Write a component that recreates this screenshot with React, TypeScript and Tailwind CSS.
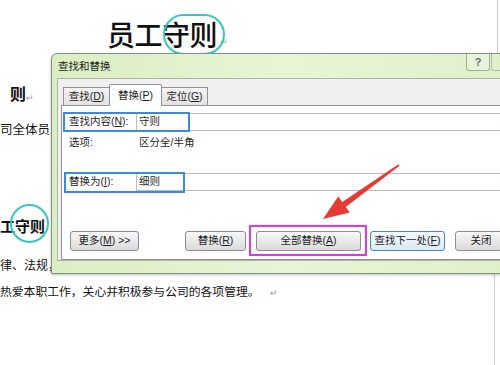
import React from "react";

function RetMark({ cls = "" }: { cls?: string }) {
  return <span className={`text-[9px] leading-none text-[#9a9a9a] ${cls}`}>↵</span>;
}

function Btn({ children, cls, primary = false }: { children: React.ReactNode; cls: string; primary?: boolean }) {
  return (
    <div
      className={`h-[20px] shrink-0 flex items-center justify-center rounded-[3px] border text-[10.5px] text-[#1e1e1e] ${cls} ${
        primary
          ? "border-[#4a86b8] bg-linear-to-b from-[#f4f9fd] to-[#dbeaf5]"
          : "border-[#8c8c8c] bg-linear-to-b from-[#f8f8f8] to-[#dadada]"
      }`}
    >
      {children}
    </div>
  );
}

function Tab({ children, selected = false, cls }: { children: React.ReactNode; selected?: boolean; cls: string }) {
  return (
    <div
      className={`flex items-center justify-center border-t border-x border-[#8e9399] text-[10.5px] text-[#1e1e1e] shrink-0 ${cls} ${
        selected ? "h-[22px] bg-white rounded-t-[2px] -mx-px relative z-10" : "h-[18px] mb-px bg-linear-to-b from-[#f4f4f4] to-[#e2e2e2]"
      }`}
    >
      {children}
    </div>
  );
}

export default function App() {
  return (
    <div className="relative w-[500px] h-[365px] overflow-hidden bg-white font-['Liberation_Sans','Noto_Sans_CJK_SC',sans-serif] text-[#111]">
      {/* document behind */}
      <div className="flex flex-col">
        <div className="h-[53px] pt-[21px] pl-[107px] flex items-start">
          <span className="text-[28px] leading-[32px] font-medium tracking-[-0.5px]">员工守则</span>
          <RetMark cls="ml-[3px] mt-[17px]" />
        </div>
        <div className="mt-[32px] h-[20px] pl-[10px] flex items-center">
          <span className="text-[16px] leading-[20px] font-bold">则</span>
          <RetMark cls="mt-[6px]" />
        </div>
        <div className="mt-[17px] h-[16px] flex items-center">
          <span className="text-[12.5px] leading-[16px]">司全体员工</span>
        </div>
        <div className="mt-[79px] h-[20px] flex items-center">
          <span className="text-[15px] leading-[20px] font-bold">工守则</span>
          <RetMark cls="ml-[6px] mt-[6px]" />
        </div>
        <div className="mt-[21px] h-[16px] flex items-center">
          <span className="text-[12px] leading-[16px]">律、法规，</span>
        </div>
        <div className="mt-[10px] h-[16px] flex items-center">
          <span className="text-[11.8px] leading-[16px]">热爱本职工作，关心并积极参与公司的各项管理。</span>
          <RetMark cls="ml-[10px] mt-[2px]" />
        </div>
      </div>

      {/* page edge lines */}
      <div className="absolute left-[497px] top-0 w-px h-[53px] bg-[#c9c9c9]" />
      <div className="absolute left-[494px] top-[274px] w-px h-[91px] bg-[#d0d0d0]" />

      {/* cyan circles */}
      <div className="absolute left-[163px] top-[14px] w-[62px] h-[41px] rounded-full border-[2.5px] border-[#36c7c1]" />
      <div className="absolute left-[10px] top-[204px] w-[39px] h-[39px] rounded-full border-[2.5px] border-[#36c7c1]" />

      {/* dialog */}
      <div className="absolute left-[51px] top-[53px] w-[470px] h-[221px] border border-[#85927f] rounded-tl-[6px] bg-linear-to-r from-[#dbeec3] via-[#e7f5d5] to-[#def0c8] flex flex-col shadow-[0_1px_3px_rgba(0,0,0,0.25)]">
        <div className="h-[24px] shrink-0 flex items-start">
          <div className="pl-[6px] pt-[6px] text-[10.5px] leading-[12px] text-[#222]">查找和替换</div>
          <div className="flex-1" />
          <div className="w-[24px] h-[17px] border-x border-b border-[#a2ad9a] rounded-b-[3px] bg-[#e8f3dc] flex items-center justify-center text-[11px] font-bold text-[#6a6a6a]">
            ?
          </div>
          <div className="w-[29px] h-[17px] ml-px border-l border-b border-[#b4bdac] rounded-bl-[3px]" />
        </div>
        <div className="mx-[5px] h-[183px] bg-[#f0f0f0] border border-[#adb5a7] pl-[3px] flex flex-col">
          <div className="mt-[5px] h-[22px] flex items-end pl-[2px] -mb-px relative z-10">
            <Tab cls="w-[47px]">
              查找(<u>D</u>)
            </Tab>
            <Tab cls="w-[53px]" selected>
              替换(<u>P</u>)
            </Tab>
            <Tab cls="w-[47px]">
              定位(<u>G</u>)
            </Tab>
          </div>
          <div className="h-[155px] bg-white border border-[#8e9399] flex flex-col text-[10.5px] text-[#1e1e1e]">
            <div className="mt-[7px] h-[18px] flex">
              <div className="w-[74px] pl-[7px] flex items-center shrink-0">
                查找内容(<u>N</u>):
              </div>
              <div className="flex-1 border border-[#b8bcc4] pl-[2px] flex items-center">守则</div>
            </div>
            <div className="mt-[4px] h-[16px] flex">
              <div className="w-[74px] pl-[7px] flex items-center shrink-0">选项:</div>
              <div className="pl-[3px] flex items-center">区分全/半角</div>
            </div>
            <div className="mt-[22px] h-[18px] flex">
              <div className="w-[74px] pl-[7px] flex items-center shrink-0">
                替换为(<u>I</u>):
              </div>
              <div className="flex-1 border border-[#b8bcc4] pl-[2px] flex items-center">细则</div>
            </div>
            <div className="mt-[40px] h-[20px] flex pl-[8px]">
              <Btn cls="w-[69px]">
                更多(<u>M</u>)&nbsp;&gt;&gt;
              </Btn>
              <Btn cls="w-[61px] ml-[46px]">
                替换(<u>R</u>)
              </Btn>
              <Btn cls="w-[105px] ml-[10px]">
                全部替换(<u>A</u>)
              </Btn>
              <Btn cls="w-[75px] ml-[9px]" primary>
                查找下一处(<u>F</u>)
              </Btn>
              <Btn cls="w-[52px] ml-[10px]">关闭</Btn>
            </div>
          </div>
        </div>
      </div>

      {/* annotation boxes */}
      <div className="absolute left-[63px] top-[112px] w-[127px] h-[20px] border-2 border-[#3b8bd9]" />
      <div className="absolute left-[64px] top-[172px] w-[121px] h-[21px] border-2 border-[#3b8bd9]" />
      <div className="absolute left-[249px] top-[225px] w-[118px] h-[31px] border-2 border-[#e236e6]" />

      {/* red arrow */}
      <svg className="absolute left-0 top-0 pointer-events-none" width="500" height="365" viewBox="0 0 500 365">
        <polygon
          points="399.6,165.8 345.7,206.9 349.8,212.6 323,219 338.2,196.4 342.3,202.1 398.4,164.2"
          fill="#e63b35"
        />
      </svg>
    </div>
  );
}
